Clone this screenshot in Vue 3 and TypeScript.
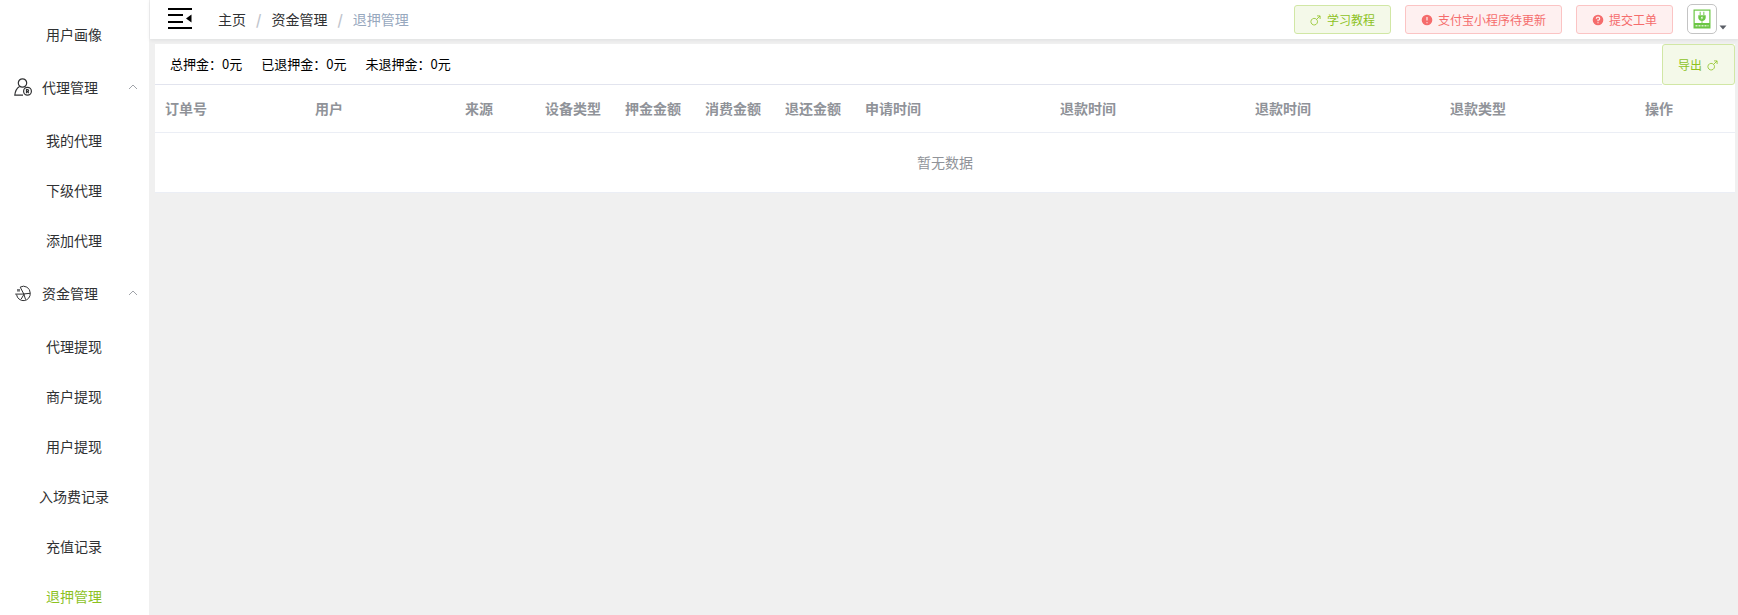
<script setup lang="ts">
import { ref } from 'vue'

interface MenuItem {
  label: string
  active?: boolean
}
interface MenuGroup {
  label: string
  icon: 'agent' | 'funds'
  open: boolean
  items: MenuItem[]
}

const looseItems: MenuItem[] = [{ label: '用户画像' }]

const groups = ref<MenuGroup[]>([
  {
    label: '代理管理',
    icon: 'agent',
    open: true,
    items: [{ label: '我的代理' }, { label: '下级代理' }, { label: '添加代理' }],
  },
  {
    label: '资金管理',
    icon: 'funds',
    open: true,
    items: [
      { label: '代理提现' },
      { label: '商户提现' },
      { label: '用户提现' },
      { label: '入场费记录' },
      { label: '充值记录' },
      { label: '退押管理', active: true },
    ],
  },
])

const crumbs = ['主页', '资金管理', '退押管理']

const totals = [
  { label: '总押金', value: 0 },
  { label: '已退押金', value: 0 },
  { label: '未退押金', value: 0 },
]

const columns = [
  { title: '订单号', size: 'wide' },
  { title: '用户', size: 'wide' },
  { title: '来源', size: 'narrow' },
  { title: '设备类型', size: 'narrow' },
  { title: '押金金额', size: 'narrow' },
  { title: '消费金额', size: 'narrow' },
  { title: '退还金额', size: 'narrow' },
  { title: '申请时间', size: 'time' },
  { title: '退款时间', size: 'time' },
  { title: '退款时间', size: 'time' },
  { title: '退款类型', size: 'time' },
  { title: '操作', size: 'rest' },
]
</script>

<template>
  <div class="layout">
    <nav class="sidebar" aria-label="菜单">
      <a v-for="item in looseItems" :key="item.label" href="#" class="item">{{ item.label }}</a>
      <template v-for="group in groups" :key="group.label">
        <button type="button" class="group" :aria-expanded="group.open" @click="group.open = !group.open">
          <svg v-if="group.icon === 'agent'" class="group-icon" viewBox="0 0 18 18" aria-hidden="true">
            <circle cx="8.5" cy="5" r="4.2" />
            <path d="M5.6 8.4C2.8 10 1.2 12.8 0.8 17.2H9" />
            <circle cx="13.5" cy="13.3" r="3.9" />
            <path d="M12.5 15.2V11.6H13.6a1 1 0 0 1 0 2H12.5M13.6 13.6L14.7 15.2" />
          </svg>
          <svg v-else class="group-icon thin" viewBox="0 0 18 18" aria-hidden="true">
            <path d="M6.2 3.1A6.7 6.7 0 0 1 16.2 9A6.7 6.7 0 0 1 2.6 10.6M1.2 10.1H8L16.2 9.3M6.2 3.1L9.8 10L11.6 15.6M10.2 10L7 15.3" />
            <path class="solid" d="M3 5H6V7.600H3z" />
          </svg>
          <span>{{ group.label }}</span>
          <svg class="chevron" :class="{ closed: !group.open }" viewBox="0 0 10 10" aria-hidden="true">
            <path d="M1 7L5 3L9 7" />
          </svg>
        </button>
        <template v-if="group.open">
          <a
            v-for="item in group.items"
            :key="item.label"
            href="#"
            class="item"
            :class="{ active: item.active }"
          >{{ item.label }}</a>
        </template>
      </template>
    </nav>

    <div class="main">
      <header class="topbar">
        <button type="button" class="toggle" aria-label="收起菜单">
          <svg viewBox="0 0 24 22" aria-hidden="true">
            <path d="M0 0H24V2H0zM0 6H15V8H0zM0 13H15V15H0zM0 19H24V21H0zM18 10.500L23.500 6.500V14.500z" />
          </svg>
        </button>
        <nav class="crumbs" aria-label="路径">
          <template v-for="(crumb, i) in crumbs" :key="crumb">
            <a v-if="i < crumbs.length - 1" href="#">{{ crumb }}</a>
            <span v-else class="current">{{ crumb }}</span>
            <span v-if="i < crumbs.length - 1" class="slash">/</span>
          </template>
        </nav>
        <div class="actions">
          <button type="button" class="btn primary">
            <svg viewBox="0 0 12 12" aria-hidden="true"><path class="line" d="M6.600 5.400A3.300 3.300 0 1 0 7.500 7.700A3.300 3.300 0 0 0 6.600 5.400L10 2M7 1.900H10.100V5" /></svg>
            <span>学习教程</span>
          </button>
          <button type="button" class="btn danger">
            <svg viewBox="0 0 12 12" aria-hidden="true"><circle cx="6" cy="6" r="5.3" /><path class="mark" d="M6 3V6.6M6 8.2V9.2" /></svg>
            <span>支付宝小程序待更新</span>
          </button>
          <button type="button" class="btn danger">
            <svg viewBox="0 0 12 12" aria-hidden="true"><circle cx="6" cy="6" r="5.3" /><path class="mark" d="M4.3 4.7A1.7 1.5 0 1 1 6 6.2V7.2M6 8.3V9.3" /></svg>
            <span>提交工单</span>
          </button>
          <button type="button" class="account" aria-label="账户">
            <span class="avatar">
              <svg viewBox="0 0 18 20" aria-hidden="true">
                <path fill="#6cc644" d="M0.500 0.500H17.500V19.500H0.500z" />
                <path fill="#fff" d="M1.700 1.700H16.300V14H1.700z" />
                <path fill="#a5dc8c" d="M6.500 2.800H8V6H6.500zM10 2.800H11.500V6H10zM8.300 11H9.700V14H8.300z" />
                <path fill="#6cc644" d="M5.300 6.300H12.700V8.500Q12.500 11.800 9 12Q5.500 11.800 5.300 8.500z" />
                <path fill="#fff" d="M9.300 7L7.600 9.300H8.800L8.400 10.800L10.300 8.600H9.100z" />
                <path stroke="#d5f0c8" stroke-width="1.5" stroke-dasharray="2 1" d="M2.500 16.700H15.500" />
              </svg>
            </span>
            <svg class="caret" viewBox="0 0 8 5" aria-hidden="true"><path d="M0.500 0.500H7.500L4 4.500z" /></svg>
          </button>
        </div>
      </header>

      <section class="card">
        <div class="summary">
          <div class="totals">
            <span v-for="total in totals" :key="total.label">{{ total.label }}：{{ total.value }}元</span>
          </div>
          <button type="button" class="btn primary export">
            <span>导出</span>
            <svg viewBox="0 0 12 12" aria-hidden="true"><path class="line" d="M6.600 5.400A3.300 3.300 0 1 0 7.500 7.700A3.300 3.300 0 0 0 6.600 5.400L10 2M7 1.900H10.100V5" /></svg>
          </button>
        </div>
        <table>
          <colgroup>
            <col v-for="(column, i) in columns" :key="i" :class="column.size" />
          </colgroup>
          <thead>
            <tr>
              <th v-for="(column, i) in columns" :key="i" scope="col">{{ column.title }}</th>
            </tr>
          </thead>
          <tbody>
            <tr>
              <td :colspan="columns.length">暂无数据</td>
            </tr>
          </tbody>
        </table>
      </section>
    </div>
  </div>
</template>

<style>
body {
  margin: 0;
  background: #f0f0f0;
}
</style>

<style scoped>
.layout {
  display: flex;
  height: 100vh;
  overflow: hidden;
  font-family: 'Noto Sans CJK SC', sans-serif;
  font-size: 14px;
  color: #303133;
}
.layout * {
  box-sizing: border-box;
}
button {
  margin: 0;
  padding: 0;
  border: 0;
  background: none;
  font: inherit;
  color: inherit;
  cursor: pointer;
}
a {
  color: inherit;
  text-decoration: none;
}
svg {
  display: block;
  flex: none;
}

.sidebar {
  flex: none;
  width: 149px;
  padding-top: 9px;
  overflow: hidden;
  background: #fff;
}
.item {
  display: block;
  padding-right: 1px;
  line-height: 50px;
  text-align: center;
}
.item.active {
  color: #8dc21f;
}
.group {
  display: flex;
  align-items: center;
  gap: 10px;
  width: 100%;
  height: 56px;
  padding: 0 11px 0 14px;
}
.group-icon {
  width: 18px;
  height: 18px;
  fill: none;
  stroke: #303133;
  stroke-width: 1.2;
}
.group-icon.thin {
  stroke-width: 1;
}
.group-icon .solid {
  fill: #77787a;
  stroke: none;
}
.chevron {
  width: 10px;
  height: 10px;
  margin-left: auto;
  fill: none;
  stroke: #a0a3a9;
}
.chevron.closed {
  transform: rotate(180deg);
}

.main {
  flex: 1;
  min-width: 0;
  padding-left: 1px;
}
.topbar {
  display: flex;
  align-items: center;
  height: 39px;
  padding: 0 11px 2px 18px;
  background: #fff;
  box-shadow: 0 1px 4px rgba(0, 21, 41, 0.08);
}
.toggle svg {
  width: 24px;
  height: 22px;
  fill: #000;
}
.crumbs {
  display: flex;
  margin-left: 26px;
  line-height: 36px;
}
.slash {
  margin: 0 10px;
  font-weight: 700;
  color: #c0c4cc;
}
.current {
  color: #97a8be;
}
.actions {
  display: flex;
  align-items: center;
  gap: 14px;
  margin-left: auto;
}
.btn {
  display: flex;
  align-items: center;
  gap: 5px;
  height: 29px;
  padding: 0 15px;
  border: 1px solid;
  border-radius: 3px;
  font-size: 12px;
  line-height: 12px;
  white-space: nowrap;
}
.topbar .btn {
  margin-top: 2px;
}
.btn svg {
  width: 12px;
  height: 12px;
  fill: currentColor;
}
.btn .line {
  fill: none;
  stroke: currentColor;
  stroke-width: 0.8;
}
.btn .mark {
  fill: none;
  stroke: #fef0f0;
  stroke-width: 1.2;
}
.btn.primary {
  color: #8dc21f;
  background: #f4f9e9;
  border-color: #d1e7a5;
}
.btn.danger {
  color: #f56c6c;
  background: #fef0f0;
  border-color: #fbc4c4;
}
.account {
  display: flex;
  align-items: flex-end;
  gap: 2px;
}
.avatar {
  display: flex;
  align-items: center;
  justify-content: center;
  width: 30px;
  height: 30px;
  border: 1px solid #c4c4c4;
  border-radius: 5px;
}
.avatar svg {
  width: 18px;
  height: 20px;
}
.caret {
  width: 8px;
  height: 5px;
  margin-bottom: 4px;
  fill: #5a5e66;
}

.card {
  margin: 5px 3px 0 5px;
  background: #fff;
}
.summary {
  display: flex;
  align-items: stretch;
}
.totals {
  display: flex;
  flex: 1;
  gap: 19px;
  padding-left: 15px;
  border-bottom: 1px solid #e2e4ee;
  font-size: 13px;
  line-height: 40px;
  color: #000;
}
.btn.export {
  height: auto;
}
table {
  width: 100%;
  table-layout: fixed;
  border-collapse: separate;
  border-spacing: 0;
  color: #909399;
}
.wide {
  width: 150px;
}
.narrow {
  width: 80px;
}
.time {
  width: 195px;
}
th,
td {
  padding: 0;
  border-bottom: 1px solid #ebeef5;
}
th {
  padding-left: 10px;
  text-align: left;
  font-weight: 700;
  line-height: 47px;
  white-space: nowrap;
}
td {
  text-align: center;
  line-height: 59px;
}
</style>
